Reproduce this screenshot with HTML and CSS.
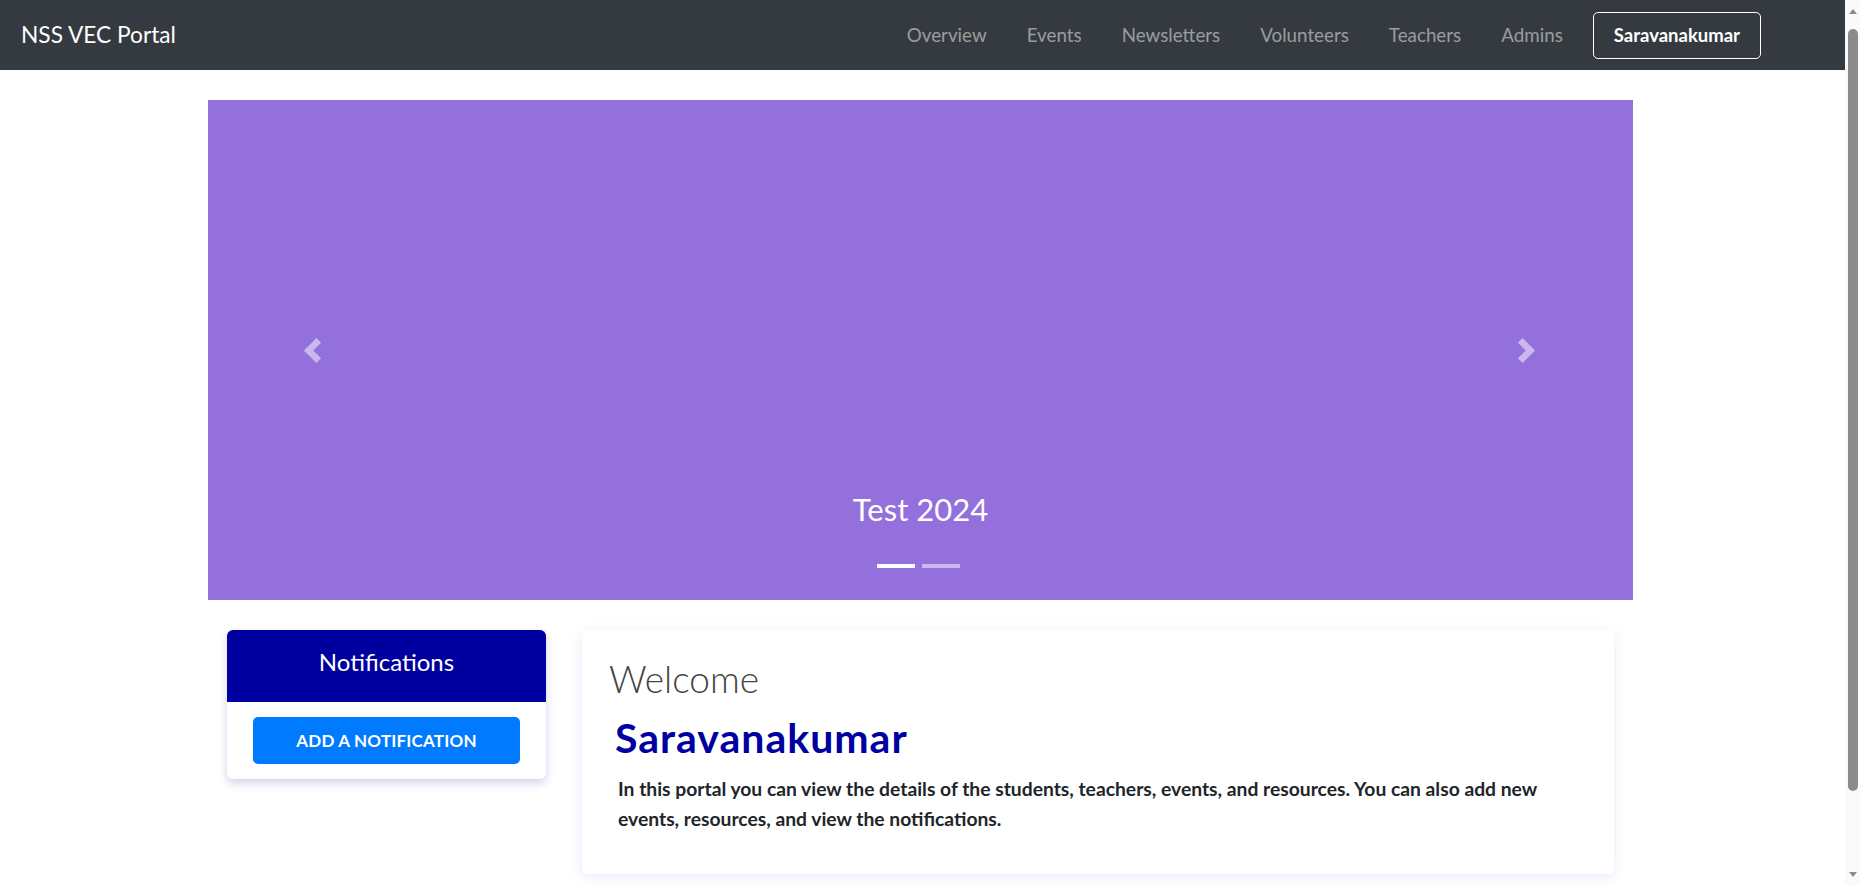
FILE: index.html
```html
<!DOCTYPE html>
<html lang="en">
<head>
<meta charset="utf-8">
<title>NSS VEC Portal</title>
<link rel="stylesheet" href="styles.css">
</head>
<body>
<div class="page">
  <nav class="navbar">
    <a class="brand" href="#">NSS VEC Portal</a>
    <div class="nav-right">
      <a class="nav-link" href="#">Overview</a>
      <a class="nav-link" href="#">Events</a>
      <a class="nav-link" href="#">Newsletters</a>
      <a class="nav-link" href="#">Volunteers</a>
      <a class="nav-link" href="#">Teachers</a>
      <a class="nav-link" href="#">Admins</a>
      <a class="user-btn" href="#">Saravanakumar</a>
    </div>
  </nav>

  <main class="container">
    <section class="carousel">
      <div class="caption">Test 2024</div>
      <a class="control control-prev" href="#" aria-label="Previous">
        <svg class="chev" viewBox="0 0 8 8" width="25" height="25"><path d="M5.25 0l-4 4 4 4 1.5-1.5-2.5-2.5 2.5-2.5-1.5-1.5z"/></svg>
      </a>
      <a class="control control-next" href="#" aria-label="Next">
        <svg class="chev" viewBox="0 0 8 8" width="25" height="25"><path d="M2.75 0l-1.5 1.5 2.5 2.5-2.5 2.5 1.5 1.5 4-4-4-4z"/></svg>
      </a>
      <div class="indicators">
        <span class="ind active"></span>
        <span class="ind"></span>
      </div>
    </section>

    <section class="lower">
      <div class="notif-card">
        <div class="notif-head">Notifications</div>
        <div class="notif-body">
          <button class="add-btn" type="button">ADD A NOTIFICATION</button>
        </div>
      </div>
      <div class="welcome-card">
        <h2 class="welcome">Welcome</h2>
        <h1 class="user-name">Saravanakumar</h1>
        <p class="intro">In this portal you can view the details of the students, teachers, events, and resources. You can also add new events, resources, and view the notifications.</p>
      </div>
    </section>
  </main>
</div>
<div class="scrollbar" aria-hidden="true">
  <span class="sb-arrow sb-up"></span>
  <span class="sb-thumb"></span>
  <span class="sb-arrow sb-down"></span>
</div>
</body>
</html>
```

FILE: styles.css
```css
* { box-sizing: border-box; }

html, body {
  margin: 0;
  padding: 0;
}

body {
  position: relative;
  font-family: Lato, "Open Sans", "Liberation Sans", sans-serif;
  color: #212529;
  background: #fff;
}

.page {
  margin-right: 15px;
  min-height: 885px;
}

.scrollbar {
  position: absolute;
  top: 0;
  right: 0;
  width: 15px;
  height: 885px;
  background: #fafafa;
  display: flex;
  flex-direction: column;
  align-items: center;
  padding: 4px 0 4px 1px;
}

.sb-arrow {
  width: 0;
  height: 0;
  border-left: 4px solid transparent;
  border-right: 4px solid transparent;
  flex: none;
}

.sb-up {
  border-bottom: 5px solid #8b8b8b;
  margin: 5px 0 15px;
}

.sb-down {
  border-top: 5px solid #8b8b8b;
  margin-top: auto;
  margin-bottom: 4px;
}

.sb-thumb {
  width: 10px;
  height: 762px;
  background: #8b8b8b;
  border-radius: 5px;
  flex: none;
}

a { text-decoration: none; }

.navbar {
  height: 70px;
  background: #343a40;
  display: flex;
  align-items: center;
  justify-content: space-between;
  padding: 0 84px 0 20px;
}

.brand {
  color: #fff;
  font-size: 22.7px;
  line-height: 28px;
  padding-left: 1px;
}

.nav-right {
  display: flex;
  align-items: center;
}

.nav-link {
  color: rgba(255, 255, 255, 0.5);
  font-size: 18.8px;
  line-height: 24px;
  padding: 0 20px;
}

.user-btn {
  margin-left: 10px;
  height: 47px;
  padding: 0 20px;
  display: flex;
  align-items: center;
  color: #fff;
  font-weight: 700;
  font-size: 18.5px;
  border: 1px solid #fff;
  border-radius: 5px;
}

.container {
  width: 1429px;
  margin: 0 auto;
  padding: 30px 4px 0 0;
}

.carousel {
  position: relative;
  height: 500px;
  background: #9370db;
  display: flex;
  flex-direction: column;
  justify-content: flex-end;
  align-items: center;
  padding-bottom: 72px;
}

.caption {
  color: #fff;
  font-size: 31px;
  line-height: 37px;
}

.control {
  position: absolute;
  top: 0;
  bottom: 0;
  width: 15%;
  display: flex;
  align-items: center;
  justify-content: center;
}

.control-prev { left: 0; padding-right: 5px; }
.control-next { right: 0; }

.chev { fill: rgba(255, 255, 255, 0.5); display: block; }

.indicators {
  position: absolute;
  left: 0;
  right: 0;
  bottom: 32px;
  display: flex;
  justify-content: center;
  gap: 7px;
  padding-right: 4px;
}

.ind {
  width: 38px;
  height: 4px;
  background: rgba(255, 255, 255, 0.5);
}

.ind.active { background: #fff; }

.lower {
  display: flex;
  align-items: flex-start;
  gap: 36px;
  margin-top: 30px;
  padding: 0 19px;
}

.notif-card {
  width: 319px;
  flex: none;
  background: #fff;
  border-radius: 6px;
  box-shadow: 0 4px 8px rgba(60, 40, 170, 0.22);
  overflow: hidden;
}

.notif-head {
  height: 72px;
  background: #0000a0;
  color: #fff;
  font-size: 24px;
  display: flex;
  align-items: center;
  justify-content: center;
  padding-bottom: 10px;
}

.notif-body {
  padding: 15px 26px;
}

.add-btn {
  display: block;
  width: 100%;
  height: 47px;
  border: none;
  border-radius: 5px;
  background: #007bff;
  color: #fff;
  font-family: Lato, "Open Sans", sans-serif;
  font-weight: 700;
  font-size: 17px;
  letter-spacing: 0.2px;
  padding: 0;
}

.welcome-card {
  flex: 1;
  min-height: 242px;
  background: #fff;
  border-radius: 6px;
  box-shadow: 0 3px 14px rgba(110, 100, 220, 0.14);
  padding: 27px 27px 40px 27px;
}

.welcome {
  margin: 0;
  font-weight: 300;
  font-size: 37px;
  line-height: 44px;
  color: #444;
}

.user-name {
  margin: 13px 0 0 0;
  padding-left: 6px;
  font-weight: 700;
  font-size: 41px;
  line-height: 48px;
  letter-spacing: 1px;
  color: #0000a0;
}

.intro {
  margin: 12px 0 0 0;
  padding-left: 9px;
  font-weight: 700;
  font-size: 19.3px;
  line-height: 30px;
  color: #212529;
}
```
